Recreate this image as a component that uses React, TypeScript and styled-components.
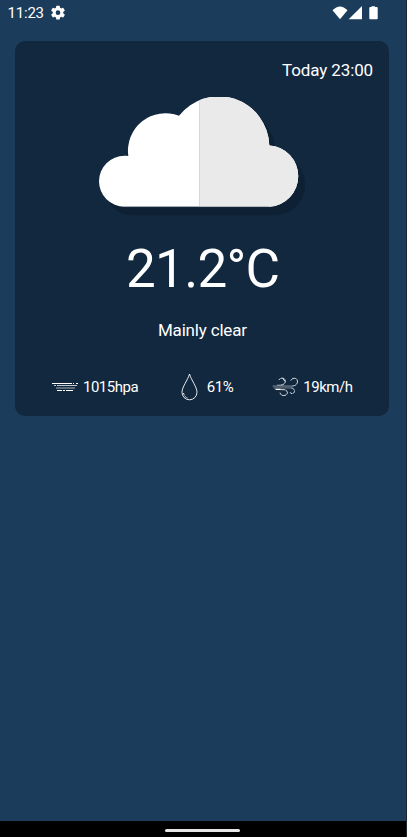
import React from "react";
import styled, { createGlobalStyle } from "styled-components";

const GlobalStyle = createGlobalStyle`
  * { box-sizing: border-box; }
  html, body { margin: 0; padding: 0; background: #1b3c5a; }
  body { font-family: Roboto, "Liberation Sans", sans-serif; color: #fff; overflow: hidden; }
  svg { display: block; flex: none; }
`;

const Screen = styled.div`
  width: 407px;
  height: 837px;
  display: flex;
  flex-direction: column;
  background: #1b3c5a;
  border-right: 1px solid #20262d;
`;

const StatusBar = styled.header`
  height: 26px;
  flex: none;
  display: flex;
  align-items: center;
  justify-content: space-between;
  padding: 0 27.5px 0 7.5px;
`;

const StatusGroup = styled.div<{ $gap: number }>`
  display: flex;
  align-items: center;
  gap: ${(p) => p.$gap}px;
`;

const Clock = styled.span`
  font-size: 15px;
  letter-spacing: -0.2px;
  line-height: 18px;
  width: 36.5px;
  white-space: nowrap;
`;

const Card = styled.main`
  margin: 15.4px 16.6px 0 15.4px;
  height: 375px;
  border-radius: 10px;
  background: #12283f;
  display: flex;
  flex-direction: column;
  align-items: center;
`;

const Moment = styled.div`
  align-self: flex-end;
  margin: 18.6px 16.4px 0 0;
  font-size: 17px;
  letter-spacing: -0.12px;
  line-height: 20px;
`;

const CloudArt = styled.svg`
  margin-top: 17px;
`;

const Temperature = styled.div`
  margin-top: 20px;
  padding-left: 0.6px;
  font-size: 53px;
  letter-spacing: -0.7px;
  line-height: 64px;
  white-space: nowrap;
`;

const Condition = styled.div`
  margin-top: 19px;
  font-size: 17px;
  letter-spacing: -0.18px;
  line-height: 20px;
`;

const Metrics = styled.div`
  display: flex;
  width: 100%;
  justify-content: space-between;
  margin-top: 32px;
  padding: 0 37px 0 36.6px;
`;

const Metric = styled.div<{ $gap: number; $shift?: number }>`
  display: flex;
  align-items: center;
  gap: ${(p) => p.$gap}px;
  height: 31px;
  margin-left: ${(p) => p.$shift ?? 0}px;
  font-size: 15px;
  letter-spacing: -0.5px;
  white-space: nowrap;
`;

const Spacer = styled.div`
  flex: 1;
`;

const NavBar = styled.footer`
  height: 16px;
  flex: none;
  background: #000;
  display: flex;
  justify-content: center;
  padding: 8px 1px 0 0;
`;

const NavHandle = styled.div`
  width: 75px;
  height: 3px;
  border-radius: 2px;
  background: #e6e6e6;
`;

const GearIcon = () => (
  <svg width="16" height="16" viewBox="1 1.500 22 22" fill="#fff">
    <path d="M19.14 12.94c.04-.3.06-.61.06-.94s-.02-.64-.07-.94l2.03-1.58a.49.49 0 0 0 .12-.61l-1.92-3.32a.49.49 0 0 0-.59-.22l-2.39.96a7 7 0 0 0-1.62-.94l-.36-2.54A.48.48 0 0 0 13.92 2.4h-3.84a.48.48 0 0 0-.47.41l-.36 2.54a7.3 7.3 0 0 0-1.62.94l-2.39-.96a.48.48 0 0 0-.59.22L2.74 8.87a.48.48 0 0 0 .12.61l2.03 1.58a6 6 0 0 0 0 1.88l-2.03 1.58a.49.49 0 0 0-.12.61l1.92 3.32c.12.22.37.29.59.22l2.39-.96a7 7 0 0 0 1.62.94l.36 2.54c.05.24.24.41.48.41h3.84c.24 0 .44-.17.47-.41l.36-2.54a7 7 0 0 0 1.62-.94l2.39.96c.22.08.47 0 .59-.22l1.92-3.32a.48.48 0 0 0-.12-.61zM12 15.2a3.2 3.2 0 1 1 0-6.4 3.2 3.2 0 0 1 0 6.4z" />
  </svg>
);

const SignalIcons = () => (
  <svg width="47" height="14" viewBox="0 0 47 14" fill="#fff">
    <path d="M0.5 4.200Q8 -3.400 15.500 4.200L8 13.300Z" />
    <path d="M30 0V13.300H16.700Z" />
    <path d="M39.500 .200h3.500v.900h1.700q1 0 1 1v10.300q0 .8-.8.800h-6.800q-.8 0-.8-.8V2.100q0-1 1-1h1.200z" />
  </svg>
);

const cloud =
  "M25.500 109.700A25.500 25.500 0 0 1 25.500 58.700Q27.500 58.500 29.300 58.900A37.500 37.500 0 0 1 80 18.800A50.500 50.500 0 0 1 170.300 48.400A30.700 30.700 0 0 1 170.300 109.700Z";

const Cloud = () => (
  <CloudArt width="209" height="120" viewBox="-1 0 209 120">
    <defs>
      <clipPath id="shade">
        <rect x="100.500" y="0" width="108" height="120" />
      </clipPath>
    </defs>
    <path d={cloud} transform="translate(6.800 8.500)" fill="#0e2034" />
    <path d={cloud} fill="#fff" />
    <path d={cloud} fill="#eaeaea" clipPath="url(#shade)" />
    <path d="M100.500 4.500V109.700" stroke="#cfd1d2" strokeWidth=".8" />
    <path d="M25 109.600H170" stroke="#8c969d" strokeWidth=".6" />
  </CloudArt>
);

const PressureIcon = () => (
  <svg width="27" height="10" viewBox="0 0 27 10" fill="none" stroke="#fff">
    <path d="M0 1.500H20M21 1.500H22M24 1.500H26" />
    <path d="M2 3.500H4M5 3.500H25" strokeOpacity=".75" />
    <path d="M4 6H23" strokeOpacity=".65" />
    <path d="M5 8.500H10M11 8.500H13M14 8.500H21" />
  </svg>
);

const DropIcon = () => (
  <svg width="17" height="28" viewBox="0 0 17 28" fill="none" stroke="#fff" strokeWidth=".9">
    <path d="M8.500 1C6.800 7 1 14 1 19.300A7.500 7.500 0 0 0 16 19.300C16 14 10.200 7 8.500 1Z" />
    <path d="M2.500 20Q3.300 23.800 6.500 25" strokeDasharray="2 .7" />
  </svg>
);

const WindIcon = () => (
  <svg width="27" height="20" viewBox="0 0 28 21" fill="none" stroke="#fff" strokeWidth=".9">
    <path d="M.5 9.500H21" strokeOpacity=".6" />
    <path d="M21 9.500C25 9.200 27 7 26.500 4C26 .5 20.700.5 19.500 3.800" strokeDasharray="5 .5" />
    <path d="M5 8.500H9" strokeOpacity=".6" />
    <path d="M9 8.500C12 8.500 14 6.500 13.800 4C13.300.4 8.500.4 7 3.200" strokeDasharray="4 .5" />
    <path d="M11 1.500L13.500 4.500" />
    <path d="M1.500 11.500H20" strokeOpacity=".5" />
    <path d="M20 11.500C24 12 24.500 16.300 21.500 17.300Q19.500 17.800 18.800 16" strokeDasharray="4 .5" />
    <path d="M9 13.300H12.500C17 14 17 18.200 13.500 19.300C10.700 20 8.500 18.600 8.300 16.500" strokeDasharray="5 .5" />
    <path d="M3.500 13H9" strokeWidth="1.300" />
  </svg>
);

export default function App() {
  return (
    <>
      <GlobalStyle />
      <Screen>
        <StatusBar>
          <StatusGroup $gap={5.5}>
            <Clock>11:23</Clock>
            <GearIcon />
          </StatusGroup>
          <SignalIcons />
        </StatusBar>
        <Card>
          <Moment>Today 23:00</Moment>
          <Cloud />
          <Temperature>21.2°C</Temperature>
          <Condition>Mainly clear</Condition>
          <Metrics>
            <Metric $gap={4}><PressureIcon />1015hpa</Metric>
            <Metric $gap={8.5} $shift={4}><DropIcon />61%</Metric>
            <Metric $gap={4}><WindIcon />19km/h</Metric>
          </Metrics>
        </Card>
        <Spacer />
        <NavBar><NavHandle /></NavBar>
      </Screen>
    </>
  );
}
